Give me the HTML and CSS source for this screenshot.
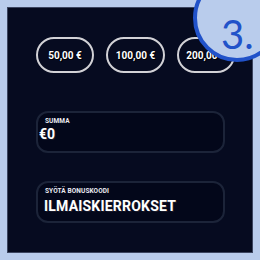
FILE: index.html
```html
<!DOCTYPE html>
<html>
<head>
<meta charset="utf-8">
<link rel="stylesheet" href="styles.css">
</head>
<body>
<div class="panel">
  <div class="pills">
    <div class="pill">50,00 €</div>
    <div class="pill">100,00 €</div>
    <div class="pill">200,00 €</div>
  </div>
  <div class="field field-sum">
    <div class="label">SUMMA</div>
    <div class="value value-sum">€0</div>
  </div>
  <div class="field field-code">
    <div class="label">SYÖTÄ BONUSKOODI</div>
    <div class="value value-code">ILMAISKIERROKSET</div>
  </div>
</div>
<div class="step-clip"><div class="step">3.</div></div>
</body>
</html>
```
FILE: styles.css
```css
html, body {
  margin: 0;
  padding: 0;
}
body {
  width: 260px;
  height: 260px;
  background: #b9ccec;
  position: relative;
  overflow: hidden;
  font-family: Roboto, "Liberation Sans", sans-serif;
}
.panel {
  position: absolute;
  left: 7px;
  top: 7px;
  border: 1px solid #3c4560;
  background: #060b20;
  padding: 29px 0 0 28px;
  box-sizing: content-box;
  width: 216px;
  height: 215px;
}
.pills {
  display: flex;
  gap: 12px;
}
.pill {
  width: 58px;
  height: 36px;
  box-sizing: border-box;
  border: 2px solid #d2d2d6;
  border-radius: 18px;
  display: flex;
  align-items: center;
  justify-content: center;
  color: #fff;
  font-weight: 700;
  font-size: 10px;
  text-shadow: 0 0 1px #000, 1px 1px 0 #000;
}
.pill:nth-child(2) { width: 59px; }
.field {
  width: 189px;
  height: 42px;
  box-sizing: border-box;
  border: 2px solid #1c2439;
  border-radius: 12px;
  background: #03071a;
  color: #fff;
}
.field-sum { margin-top: 38px; }
.field-code { margin-top: 28px; }
.label {
  font-size: 6.5px;
  font-weight: 700;
  letter-spacing: 0.1px;
  color: #ececf2;
  padding: 3.5px 0 0 7px;
  line-height: 8px;
}
.value {
  font-weight: 700;
  color: #fff;
  text-shadow: 1px 1px 0 #1a1a2a, -0.5px 0 0 #1a1a2a;
}
.value-sum {
  font-size: 14px;
  line-height: 16px;
  padding: 1px 0 0 1px;
}
.value-code {
  font-size: 14px;
  line-height: 16px;
  padding: 3px 0 0 6px;
  letter-spacing: 0.2px;
}
.step-clip {
  position: absolute;
  left: 193px;
  top: 0;
  width: 67px;
  height: 64px;
  overflow: hidden;
}
.step {
  margin-top: -26px;
  width: 88px;
  height: 88px;
  box-sizing: border-box;
  border: 4px solid #2152c9;
  border-radius: 50%;
  background: #b9ccec;
  color: #2152c9;
  font-family: Lato, "Noto Sans", sans-serif;
  font-weight: 400;
  font-size: 40px;
  line-height: 1;
  padding: 36px 0 0 24px;
}
```
